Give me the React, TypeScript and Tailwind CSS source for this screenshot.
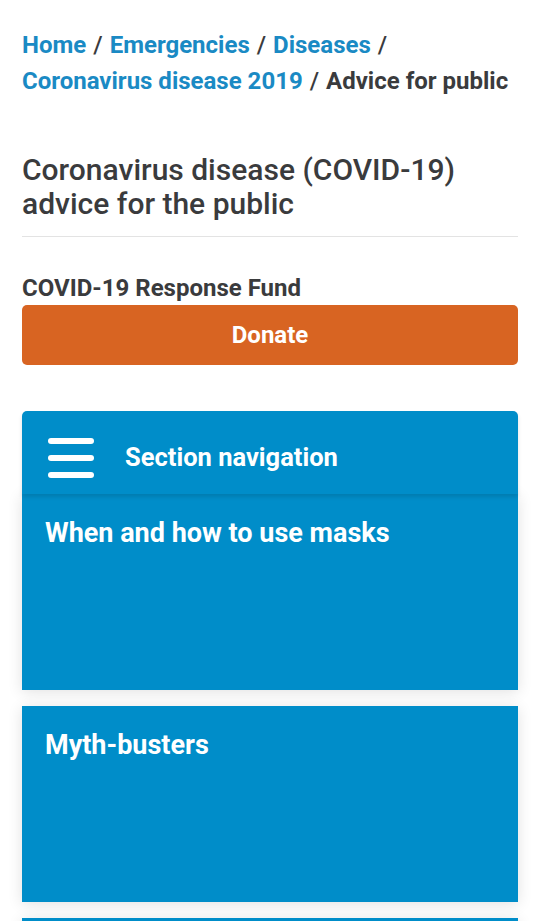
const crumbs = ['Home', 'Emergencies', 'Diseases', 'Coronavirus disease 2019'];

const cards = ['When and how to use masks', 'Myth-busters', ''];

const App: React.FC = () => {
  return (
    <div className="h-[921px] overflow-hidden bg-white px-[22px] pt-[27px] font-['Roboto',sans-serif] text-[#3a3b3d]">
      {/* breadcrumb */}
      <nav className="text-[24px] leading-[36px] font-bold">
        {crumbs.map((c, i) => (
          <span key={c}>
            <span className="text-[#1a8ac4]">{c}</span>
            <span className="text-[#3a3b3d] font-medium mx-[7px]">/</span>
            {i === 2 && <br />}
          </span>
        ))}
        <span className="text-[#3a3b3d]">Advice for public</span>
      </nav>

      <h1 className="mt-[54px] text-[30px] leading-[34px] font-medium text-[#3a3b3d]">
        Coronavirus disease (COVID-19) advice for the public
      </h1>
      <div className="mt-[15px] border-b border-[#e3e3e3]" />

      <p className="mt-[37px] text-[24px] leading-[28px] font-bold">COVID-19 Response Fund</p>
      <button className="mt-[3px] w-full h-[60px] rounded-[5px] bg-[#d86422] text-white text-[24px] font-bold">
        Donate
      </button>

      <div className="mt-[46px] flex flex-col">
        <div className="h-[83px] rounded-t-[5px] bg-[#008dc9] flex items-center pl-[26px] pt-[10px] shadow-[0_3px_4px_rgba(0,0,0,0.12)] relative z-10">
          <div className="flex flex-col gap-[11px] w-[46px]">
            <span className="block h-[6px] rounded-full bg-white" />
            <span className="block h-[6px] rounded-full bg-white" />
            <span className="block h-[6px] rounded-full bg-white" />
          </div>
          <span className="ml-[31px] text-white text-[25.5px] font-bold">Section navigation</span>
        </div>
        <div className="flex flex-col gap-[16px]">
          {cards.map((c, i) => (
            <div
              key={i}
              className="h-[196px] bg-[#008dc9] px-[23px] pt-[23px] shadow-[0_2px_14px_rgba(0,0,0,0.12)]"
            >
              {c && <p className="text-white text-[27px] leading-[32px] font-bold">{c}</p>}
            </div>
          ))}
        </div>
      </div>
    </div>
  );
};

export default App;
